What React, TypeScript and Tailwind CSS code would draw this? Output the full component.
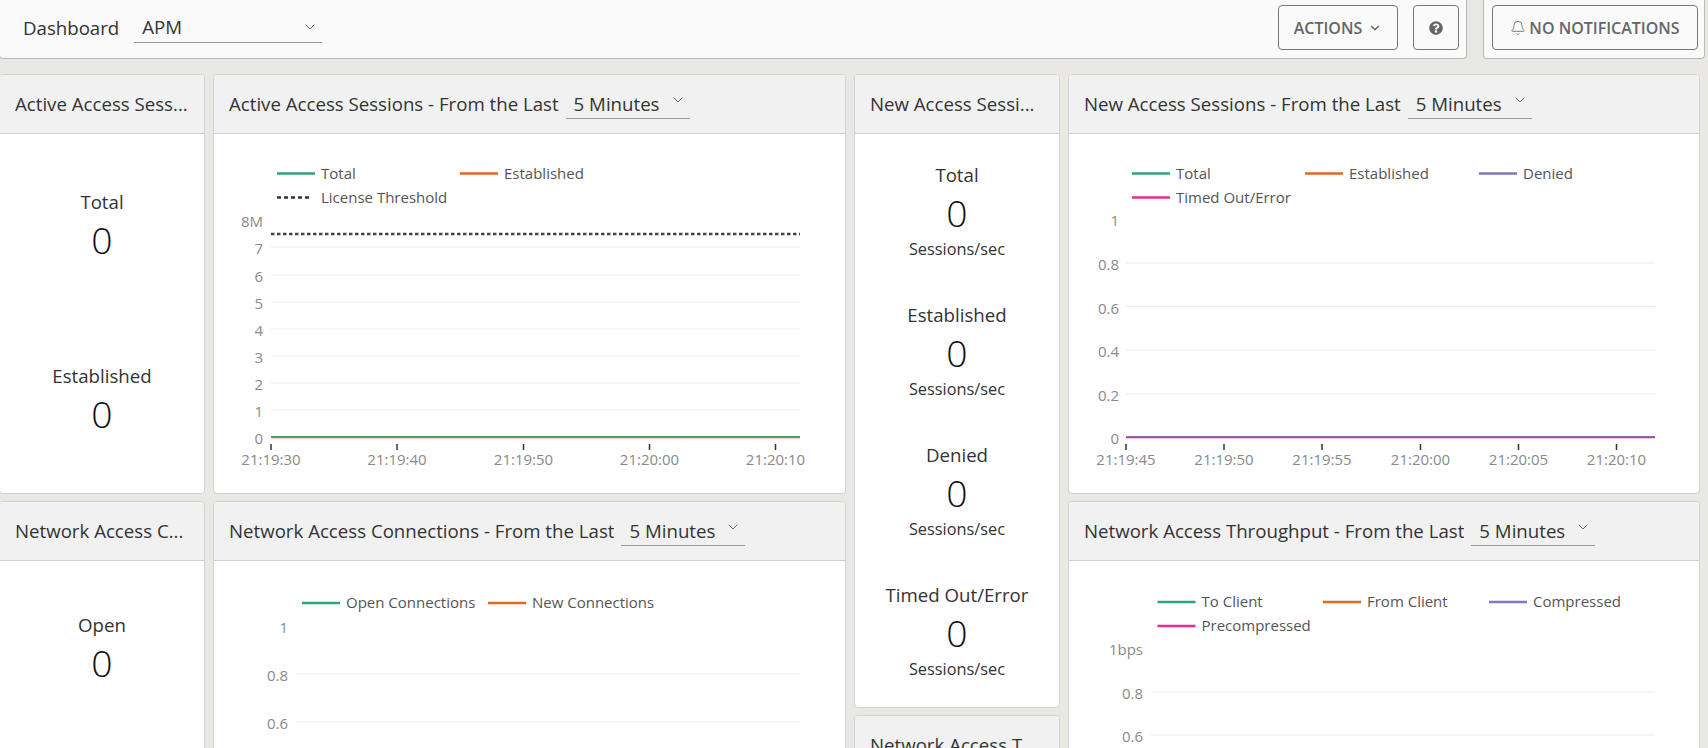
import { ChevronDown, Bell } from 'lucide-react';
import { FaQuestionCircle } from 'react-icons/fa';

const TEAL = '#2ca57f';
const ORANGE = '#dd6a1f';
const PURPLE = '#7f78bd';
const PINK = '#e52f8f';

type Legend = { x: number; y: number; label: string; color: string; dotted?: boolean };

type ChartProps = {
  box: [number, number, number, number];
  x1: number;
  x2: number;
  labelX: number;
  legend: Legend[];
  grid: { y: number; label: string; line?: boolean }[];
  ticks?: { x: number; label: string }[];
  tickY?: number;
  base?: string[];
  threshold?: number;
};

function Chart({ box, x1, x2, labelX, legend, grid, ticks, tickY = 444, base, threshold }: ChartProps) {
  return (
    <svg viewBox={box.join(' ')} width={box[2]} height={box[3]} className="block" fontSize="15">
      {legend.map((l) => (
        <g key={l.label}>
          <line
            x1={l.x}
            x2={l.x + (l.dotted ? 34 : 38)}
            y1={l.y}
            y2={l.y}
            stroke={l.color}
            strokeWidth="2.5"
            strokeDasharray={l.dotted ? '4 3' : undefined}
          />
          <text x={l.x + 44} y={l.y + 5} fill="#555">
            {l.label}
          </text>
        </g>
      ))}
      {grid.map((g) => (
        <g key={g.label}>
          {g.line !== false && <line x1={x1} x2={x2} y1={g.y} y2={g.y} stroke="#ececec" strokeWidth="1" />}
          <text x={labelX} y={g.y + 7} textAnchor="end" fill="#8a8a8a">
            {g.label}
          </text>
        </g>
      ))}
      {threshold && (
        <line x1={x1} x2={x2} y1={threshold} y2={threshold} stroke="#444" strokeWidth="2.5" strokeDasharray="3.5 2.5" />
      )}
      {base?.map((c, i) => {
        const y = 437.5 - (base.length - 1 - i) * 0.75;
        return <line key={c} x1={x1} x2={x2} y1={y} y2={y} stroke={c} strokeWidth="1.5" />;
      })}
      {ticks?.map((t) => (
        <g key={t.label}>
          <line x1={t.x} x2={t.x} y1={tickY} y2={tickY + 6} stroke="#333" strokeWidth="1.5" />
          <text x={t.x} y={tickY + 21} textAnchor="middle" fill="#8a8a8a">
            {t.label}
          </text>
        </g>
      ))}
    </svg>
  );
}

function Select({ value, className }: { value: string; className: string }) {
  return (
    <div className={`relative border-b border-[#999] ${className}`}>
      <span className="pl-2">{value}</span>
      <ChevronDown className="absolute right-[4px] top-[3px] w-4 h-4 text-[#666]" strokeWidth={1.5} />
    </div>
  );
}

function Panel({ title, select, className, children }: { title: string; select?: boolean; className: string; children: React.ReactNode }) {
  return (
    <div className={`bg-white border border-[#d2d2d0] rounded-[4px] overflow-hidden shrink-0 ${className}`}>
      <div className="h-[59px] bg-[#f1f1f1] border-b border-[#cfcfcf] flex items-center px-[15px] text-[18.67px] text-[#333] whitespace-nowrap">
        <span className="truncate">{title}</span>
        {select && <Select value="5 Minutes" className="ml-[7px] mt-[-1px] w-[124px] h-[30px] leading-[29px] shrink-0" />}
      </div>
      {children}
    </div>
  );
}

function Stat({ label, unit, className }: { label: string; unit?: boolean; className: string }) {
  return (
    <div className={`flex flex-col items-center justify-center text-[#333] ${className}`}>
      <div className="text-[18.67px] leading-[26px]">{label}</div>
      <div className="text-[37.33px] font-light text-[#111] leading-[50px]">0</div>
      {unit && <div className="text-[16.33px] leading-[22px]">Sessions/sec</div>}
    </div>
  );
}

export default function App() {
  return (
    <div className="w-[1708px] h-[748px] overflow-hidden bg-[#e9e8e5] font-['Open_Sans',sans-serif] text-[#333]">
      <div className="flex h-[59px] -ml-px">
        <div className="w-[1468px] bg-[#fafafa] border border-t-0 border-[#b9b9b7] rounded-b-[4px] flex items-center pl-[23px] pr-[7px]">
          <span className="text-[18.67px] mt-[-2px]">Dashboard</span>
          <Select value="APM" className="ml-[15px] mt-[-2px] w-[188px] h-[30px] leading-[27px] text-[18.67px] [&>svg]:top-[6px]" />
          <button className="ml-auto mt-[-3px] w-[120px] h-[45px] border border-[#777] rounded-[4px] flex items-center justify-center gap-[6px] text-[16px] font-semibold text-[#666]">
            ACTIONS <ChevronDown className="w-[14px] h-[14px]" strokeWidth={2.5} />
          </button>
          <button className="ml-[15px] mt-[-3px] w-[46px] h-[45px] border border-[#777] rounded-[4px] flex items-center justify-center text-[#666]">
            <FaQuestionCircle className="w-[14px] h-[14px]" />
          </button>
        </div>
        <div className="ml-[16px] w-[222px] bg-[#fafafa] border border-t-0 border-[#b9b9b7] rounded-b-[4px] flex items-center pl-[8px]">
          <button className="mt-[-3px] w-[206px] h-[45px] border border-[#777] rounded-[4px] flex items-center justify-center gap-[3px] text-[16px] font-semibold text-[#666]">
            <Bell className="w-[16px] h-[16px]" strokeWidth={1.25} /> NO NOTIFICATIONS
          </button>
        </div>
      </div>

      <div className="flex gap-[8px] mt-[15px] -ml-px">
        <div className="flex flex-col gap-[7px] w-[206px]">
          <Panel title="Active Access Sess..." className="h-[420px]">
            <div className="pt-[6px]">
              <Stat label="Total" className="h-[174px]" />
              <Stat label="Established" className="h-[174px]" />
            </div>
          </Panel>
          <Panel title="Network Access C..." className="h-[400px]">
            <div className="pt-[2px]">
              <Stat label="Open" className="h-[174px]" />
            </div>
          </Panel>
        </div>

        <div className="flex flex-col gap-[7px] w-[633px]">
          <Panel title="Active Access Sessions - From the Last" select className="h-[420px]">
            <Chart
              box={[214, 134, 631, 359]}
              x1={271}
              x2={800}
              labelX={263}
              threshold={234}
              legend={[
                { x: 277, y: 173.5, label: 'Total', color: TEAL },
                { x: 460, y: 173.5, label: 'Established', color: ORANGE },
                { x: 277, y: 197.5, label: 'License Threshold', color: '#333', dotted: true },
              ]}
              grid={[
                { y: 220, label: '8M', line: false },
                { y: 247, label: '7' },
                { y: 275, label: '6' },
                { y: 302, label: '5' },
                { y: 329, label: '4' },
                { y: 356, label: '3' },
                { y: 383, label: '2' },
                { y: 410, label: '1' },
                { y: 437, label: '0', line: false },
              ]}
              base={[TEAL, ORANGE]}
              ticks={[
                { x: 271, label: '21:19:30' },
                { x: 397, label: '21:19:40' },
                { x: 523.5, label: '21:19:50' },
                { x: 649.5, label: '21:20:00' },
                { x: 775.5, label: '21:20:10' },
              ]}
            />
          </Panel>
          <Panel title="Network Access Connections - From the Last" select className="h-[400px]">
            <Chart
              box={[214, 560, 631, 188]}
              x1={296}
              x2={800}
              labelX={288}
              legend={[
                { x: 302, y: 602, label: 'Open Connections', color: TEAL },
                { x: 488, y: 602, label: 'New Connections', color: ORANGE },
              ]}
              grid={[
                { y: 625, label: '1', line: false },
                { y: 673, label: '0.8' },
                { y: 721, label: '0.6' },
              ]}
            />
          </Panel>
        </div>

        <div className="flex flex-col gap-[7px] w-[206px]">
          <Panel title="New Access Sessi..." className="h-[634px]">
            <div className="pt-[7px]">
              <Stat label="Total" unit className="h-[140px]" />
              <Stat label="Established" unit className="h-[140px]" />
              <Stat label="Denied" unit className="h-[140px]" />
              <Stat label="Timed Out/Error" unit className="h-[140px]" />
            </div>
          </Panel>
          <Panel title="Network Access T..." className="h-[200px]">
            <div />
          </Panel>
        </div>

        <div className="flex flex-col gap-[7px] w-[632px]">
          <Panel title="New Access Sessions - From the Last" select className="h-[420px]">
            <Chart
              box={[1069, 134, 630, 359]}
              x1={1126}
              x2={1655}
              labelX={1119}
              legend={[
                { x: 1132, y: 173.5, label: 'Total', color: TEAL },
                { x: 1305, y: 173.5, label: 'Established', color: ORANGE },
                { x: 1479, y: 173.5, label: 'Denied', color: PURPLE },
                { x: 1132, y: 197.5, label: 'Timed Out/Error', color: PINK },
              ]}
              grid={[
                { y: 219, label: '1', line: false },
                { y: 263, label: '0.8' },
                { y: 306.5, label: '0.6' },
                { y: 350, label: '0.4' },
                { y: 394, label: '0.2' },
                { y: 437, label: '0', line: false },
              ]}
              base={[PURPLE, PINK]}
              ticks={[
                { x: 1126, label: '21:19:45' },
                { x: 1224, label: '21:19:50' },
                { x: 1322, label: '21:19:55' },
                { x: 1420.5, label: '21:20:00' },
                { x: 1518.5, label: '21:20:05' },
                { x: 1616.5, label: '21:20:10' },
              ]}
            />
          </Panel>
          <Panel title="Network Access Throughput - From the Last" select className="h-[400px]">
            <Chart
              box={[1069, 560, 630, 188]}
              x1={1151}
              x2={1655}
              labelX={1143}
              legend={[
                { x: 1157.5, y: 601, label: 'To Client', color: TEAL },
                { x: 1323, y: 601, label: 'From Client', color: ORANGE },
                { x: 1489, y: 601, label: 'Compressed', color: PURPLE },
                { x: 1157.5, y: 625, label: 'Precompressed', color: PINK },
              ]}
              grid={[
                { y: 647, label: '1bps', line: false },
                { y: 691, label: '0.8' },
                { y: 734, label: '0.6' },
              ]}
            />
          </Panel>
        </div>
      </div>
    </div>
  );
}
